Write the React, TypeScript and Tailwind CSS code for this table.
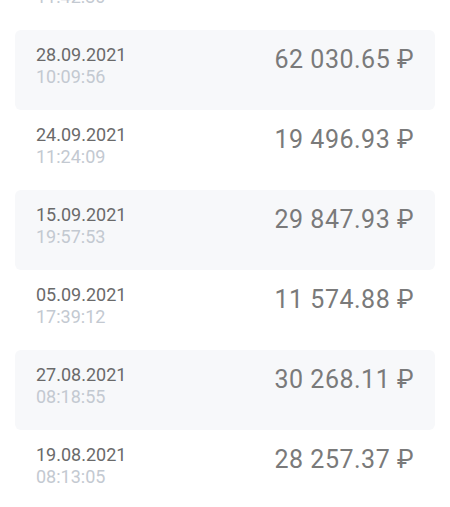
import React from "react";

const rows = [
  { date: "", time: "11:42:30", amount: "", shaded: false },
  { date: "28.09.2021", time: "10:09:56", amount: "62 030.65 ₽", shaded: true },
  { date: "24.09.2021", time: "11:24:09", amount: "19 496.93 ₽", shaded: false },
  { date: "15.09.2021", time: "19:57:53", amount: "29 847.93 ₽", shaded: true },
  { date: "05.09.2021", time: "17:39:12", amount: "11 574.88 ₽", shaded: false },
  { date: "27.08.2021", time: "08:18:55", amount: "30 268.11 ₽", shaded: true },
  { date: "19.08.2021", time: "08:13:05", amount: "28 257.37 ₽", shaded: false },
];

export default function App() {
  return (
    <div
      className="w-[450px] h-[507px] overflow-hidden bg-white"
      style={{ fontFamily: "Roboto, 'Noto Sans', sans-serif" }}
    >
      <div className="flex flex-col px-[15px] mt-[-50px]">
        {rows.map((r, i) => (
          <div
            key={i}
            className={`h-[80px] shrink-0 rounded-[6px] flex justify-between items-start pt-[14px] pl-[21px] pr-[21px] ${
              r.shaded ? "bg-[#f7f8fa]" : "bg-white"
            }`}
          >
            <div className="flex flex-col">
              <span className="text-[18px] leading-[22px] text-[#6a6a6a]">
                {r.date || "\u00a0"}
              </span>
              <span className="text-[18px] leading-[22px] text-[#c3c9d1]">
                {r.time}
              </span>
            </div>
            <span className="text-[25px] leading-[32px] text-[#7a7a7a] tracking-[0.5px]">
              {r.amount}
            </span>
          </div>
        ))}
      </div>
    </div>
  );
}
